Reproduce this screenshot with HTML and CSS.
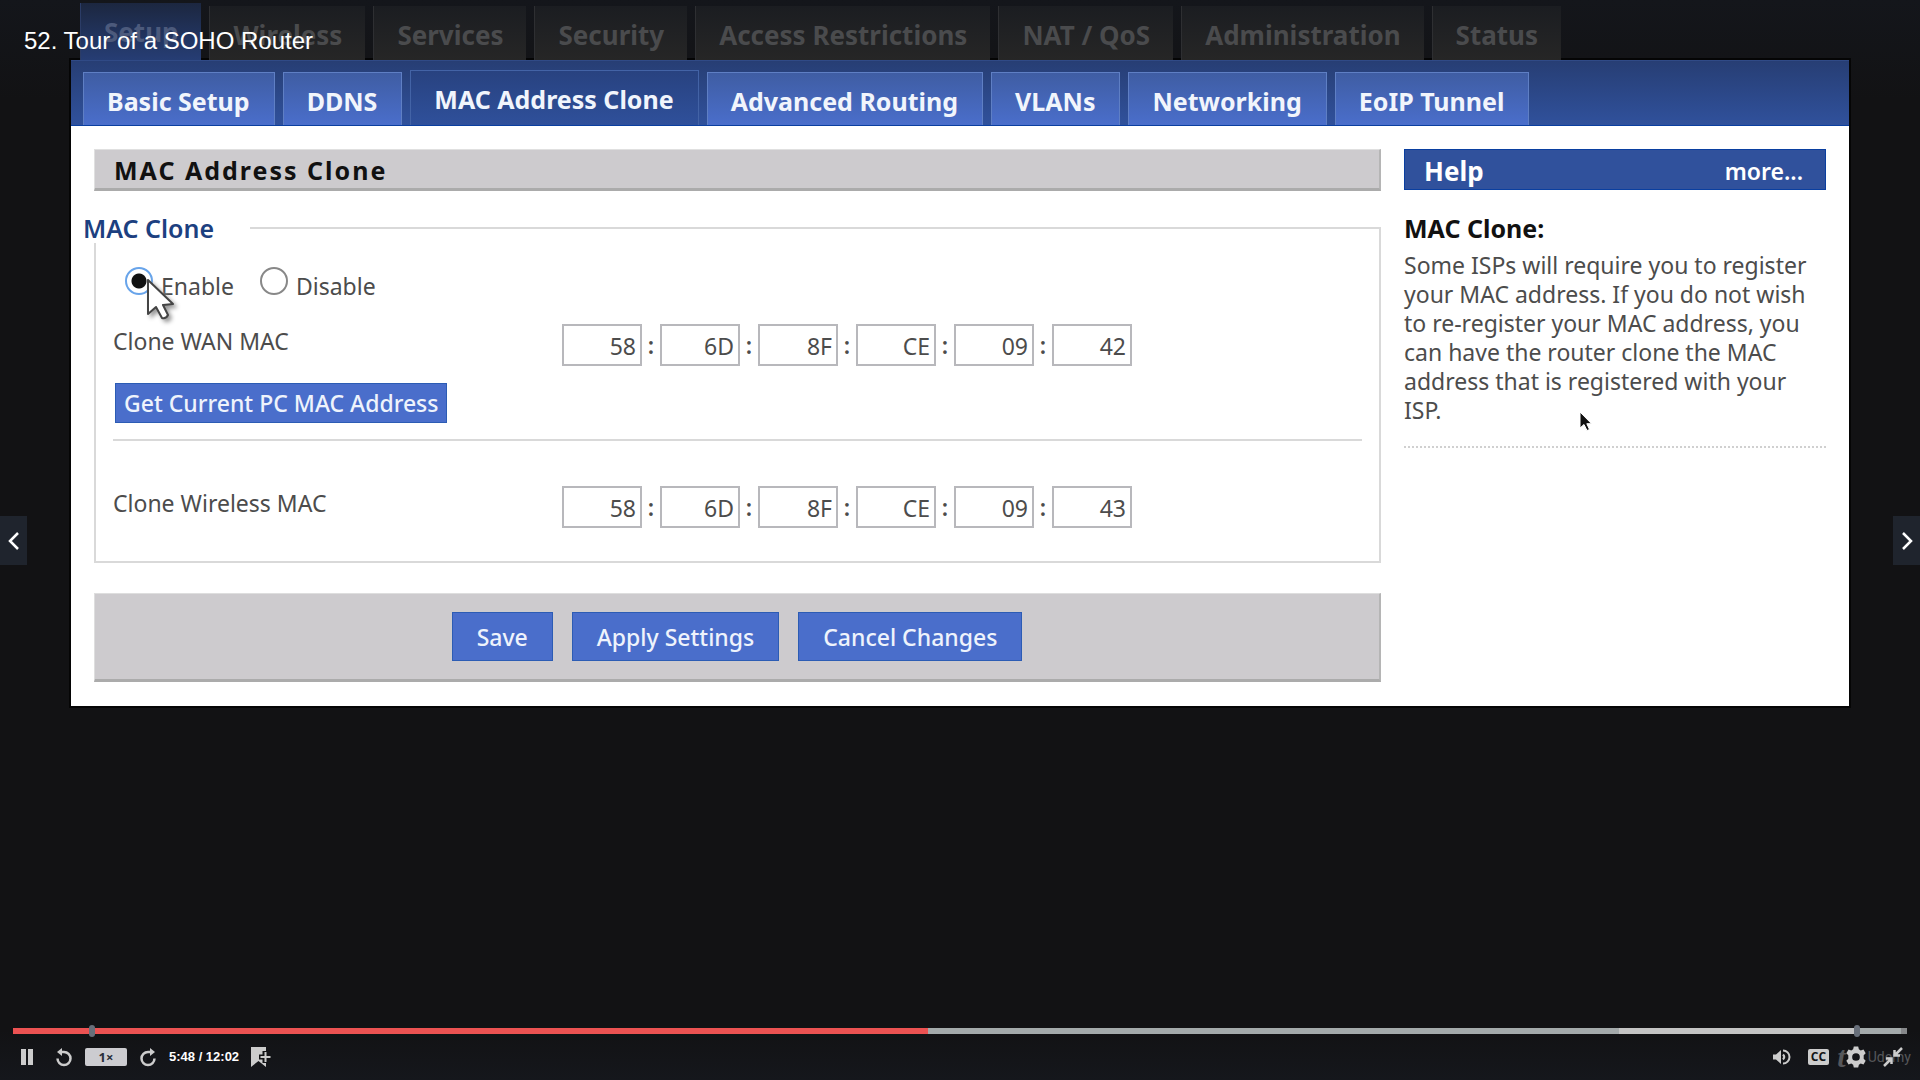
FILE: index.html
```html
<!DOCTYPE html>
<html lang="en">
<head>
<meta charset="utf-8">
<title>52. Tour of a SOHO Router</title>
<link rel="stylesheet" href="styles.css">
</head>
<body>
<div class="player">
  <h1 class="lecture-title">52. Tour of a SOHO Router</h1>

  <main class="video">
    <nav class="main-tabs" aria-label="Router sections">
      <a class="main-tab main-tab-active" href="#">Setup</a>
      <a class="main-tab" href="#">Wireless</a>
      <a class="main-tab" href="#">Services</a>
      <a class="main-tab" href="#">Security</a>
      <a class="main-tab" href="#">Access Restrictions</a>
      <a class="main-tab" href="#">NAT / QoS</a>
      <a class="main-tab" href="#">Administration</a>
      <a class="main-tab" href="#">Status</a>
    </nav>
    <div class="router">
      <nav class="sub-tabs" aria-label="Setup pages">
        <a class="sub-tab" href="#">Basic Setup</a>
        <a class="sub-tab" href="#">DDNS</a>
        <a class="sub-tab sub-tab-active" href="#">MAC Address Clone</a>
        <a class="sub-tab" href="#">Advanced Routing</a>
        <a class="sub-tab" href="#">VLANs</a>
        <a class="sub-tab" href="#">Networking</a>
        <a class="sub-tab" href="#">EoIP Tunnel</a>
      </nav>
      <div class="router-body">
        <form class="settings">
          <h2 class="settings-title">MAC Address Clone</h2>
          <fieldset class="group">
            <legend class="group-title">MAC Clone</legend>
            <div class="radios">
              <label class="choice"><input class="radio" type="radio" name="clone" checked>Enable</label>
              <label class="choice"><input class="radio" type="radio" name="clone">Disable</label>
            </div>
            <div class="mac-row">
              <span class="mac-label" id="wan">Clone WAN MAC</span>
              <div class="mac" role="group" aria-labelledby="wan">
                <input class="octet" aria-label="WAN octet 1" value="58"><span class="colon">:</span>
                <input class="octet" aria-label="WAN octet 2" value="6D"><span class="colon">:</span>
                <input class="octet" aria-label="WAN octet 3" value="8F"><span class="colon">:</span>
                <input class="octet" aria-label="WAN octet 4" value="CE"><span class="colon">:</span>
                <input class="octet" aria-label="WAN octet 5" value="09"><span class="colon">:</span>
                <input class="octet" aria-label="WAN octet 6" value="42">
              </div>
            </div>
            <button class="button button-inline" type="button">Get Current PC MAC Address</button>
            <hr class="rule">
            <div class="mac-row">
              <span class="mac-label" id="wireless">Clone Wireless MAC</span>
              <div class="mac" role="group" aria-labelledby="wireless">
                <input class="octet" aria-label="Wireless octet 1" value="58"><span class="colon">:</span>
                <input class="octet" aria-label="Wireless octet 2" value="6D"><span class="colon">:</span>
                <input class="octet" aria-label="Wireless octet 3" value="8F"><span class="colon">:</span>
                <input class="octet" aria-label="Wireless octet 4" value="CE"><span class="colon">:</span>
                <input class="octet" aria-label="Wireless octet 5" value="09"><span class="colon">:</span>
                <input class="octet" aria-label="Wireless octet 6" value="43">
              </div>
            </div>
          </fieldset>
          <div class="actions">
            <button class="button" type="button">Save</button>
            <button class="button" type="button">Apply Settings</button>
            <button class="button" type="button">Cancel Changes</button>
          </div>
        </form>
        <aside class="help">
          <div class="help-head"><h2 class="help-title">Help</h2><a class="help-more" href="#">more...</a></div>
          <h3 class="help-topic">MAC Clone:</h3>
          <p class="help-text">Some ISPs will require you to register your MAC address. If you do not wish to re-register your MAC address, you can have the router clone the MAC address that is registered with your ISP.</p>
        </aside>
      </div>
    </div>
  </main>

  <svg class="cursor cursor-video" width="36" height="46" viewBox="0 0 36 46" aria-hidden="true"><path d="M1 1V35L9 28L15 39Q19 40 21 36L16 26L26 25Z" fill="#fff" stroke="#444" stroke-width="2" stroke-linejoin="round"/></svg>
  <svg class="cursor cursor-live" width="14" height="22" viewBox="0 0 14 22" aria-hidden="true"><path d="M1 1V17L5 13.500L8 19.500L10.500 18.500L7.800 12.700H12.500Z" fill="#111" stroke="#fff" stroke-width="1"/></svg>

  <button class="side side-prev" type="button" aria-label="Previous"><svg width="12" height="18" viewBox="0 0 12 18"><path d="M10 1L2 9L10 17" fill="none" stroke="#fff" stroke-width="2.500"/></svg></button>
  <button class="side side-next" type="button" aria-label="Next"><svg width="12" height="18" viewBox="0 0 12 18"><path d="M2 1L10 9L2 17" fill="none" stroke="#fff" stroke-width="2.500"/></svg></button>

  <footer class="controls">
    <div class="progress">
      <div class="seg seg-played" style="width:48.3%"></div>
      <div class="seg seg-buffered" style="width:36.5%"></div>
      <div class="seg seg-ahead" style="width:12.4%"></div>
      <div class="seg seg-buffered" style="width:2.5%"></div>
      <div class="seg seg-rest"></div>
      <span class="pin" style="left:4.2%"></span>
      <span class="pin" style="left:97.4%"></span>
    </div>
    <div class="bar">
      <div class="bar-side bar-left">
        <button class="icon" type="button" aria-label="Pause"><svg width="26" height="20" viewBox="0 0 26 20"><path d="M4 2h5v16H4zM11 2h5v16h-5z"/></svg></button>
        <button class="icon" type="button" aria-label="Rewind"><svg width="20" height="20" viewBox="0 0 20 20"><path d="M3.500 11.500A6.500 6.500 0 1 0 10 5H6" fill="none" stroke="#ccc" stroke-width="2.500"/><path d="M8 1V9L3 5Z"/></svg></button>
        <button class="speed" type="button">1×</button>
        <button class="icon" type="button" aria-label="Forward"><svg width="20" height="20" viewBox="0 0 20 20"><path d="M16.500 11.500A6.500 6.500 0 1 1 10 5H14" fill="none" stroke="#ccc" stroke-width="2.500"/><path d="M12 1V9L17 5Z"/></svg></button>
        <span class="time">5:48 / 12:02</span>
        <button class="icon" type="button" aria-label="Add bookmark"><svg width="22" height="22" viewBox="0 0 22 22"><path d="M1 1H16V21L8.500 15L1 21Z"/><path d="M15 5V17M9 11H21" stroke="#131416" stroke-width="5"/><path d="M15.500 6V16M10.500 11H20.500" stroke="#ccc" stroke-width="2"/></svg></button>
      </div>
      <div class="bar-side bar-right">
        <button class="icon" type="button" aria-label="Volume"><svg width="20" height="20" viewBox="0 0 20 20"><path d="M1 7.500H4L9 3V17L4 12.500H1Z"/><path d="M11 7.500Q13.500 10 11 12.500M11 3.500A6.500 6.500 0 0 1 11 16.500" fill="none" stroke="#ccc" stroke-width="2"/></svg></button>
        <button class="cc" type="button" aria-label="Captions">CC</button>
        <span class="brand" aria-hidden="true"><i class="brand-mark">t</i><span>Udemy</span></span>
        <button class="icon" type="button" aria-label="Settings"><svg width="22" height="22" viewBox="0 0 20 20"><path fill-rule="evenodd" d="M8 0.500H12L12.600 3L14.300 4L16.800 3.200L18.800 6.700L17 8.500V11.500L18.800 13.300L16.800 16.800L14.300 16L12.600 17L12 19.500H8L7.400 17L5.700 16L3.200 16.800L1.200 13.300L3 11.500V8.500L1.200 6.700L3.200 3.200L5.700 4L7.400 3ZM10 6.500A3.500 3.500 0 1 0 10 13.500A3.500 3.500 0 1 0 10 6.500Z"/></svg></button>
        <button class="icon" type="button" aria-label="Exit fullscreen"><svg width="20" height="20" viewBox="0 0 20 20"><path d="M19 1L12 8M11.500 3V8.500H17M1 19L8 12M3 11.500H8.500V17" fill="none" stroke="#ccc" stroke-width="2.500"/></svg></button>
      </div>
    </div>
  </footer>
</div>
</body>
</html>
```
FILE: styles.css
```css
* { box-sizing: border-box; }
body { margin: 0; background: #121214; }
a { color: inherit; text-decoration: none; }
h1, h2, h3, p { margin: 0; }
button { font: inherit; border: 0; padding: 0; cursor: pointer; }

.player {
  position: relative;
  display: flex;
  flex-direction: column;
  min-height: 100vh;
  background: linear-gradient(#14161b, #121214 100px, #121214 calc(100% - 50px), #15171c);
  font-family: "Noto Sans", "Open Sans", sans-serif;
  font-size: 23px;
}
.lecture-title {
  position: absolute;
  top: 26px;
  left: 24px;
  z-index: 2;
  color: #fff;
  font: 24px/30px "Liberation Sans", Arial, sans-serif;
}

/* Router page */
.video { flex: 1; padding: 0 71px; }
.main-tabs { display: flex; align-items: flex-end; gap: 8px; height: 60px; padding-left: 9px; }
.main-tab {
  height: 54px;
  padding: 0 23px;
  background: linear-gradient(#1b1d21, #262626);
  border-left: 1px solid #2e2f32;
  color: #4a4b4d;
  font-size: 26px;
  font-weight: 700;
  line-height: 58px;
  white-space: nowrap;
}
.main-tab-active { height: 57px; background: linear-gradient(#1c2740, #263d74); border-color: #2b3c66; color: #4c5a7c; }
.router { background: #fff; box-shadow: 0 0 0 2px #050505; }
.sub-tabs {
  display: flex;
  align-items: flex-end;
  gap: 8px;
  height: 66px;
  padding-left: 12px;
  background: linear-gradient(#273e74, #30519c);
  border-top: 1px solid #304a86;
  border-bottom: 1px solid #0a3fa0;
}
.sub-tab {
  height: 53px;
  padding: 0 24px 0 23px;
  background: linear-gradient(#3f5da3, #4a6ecb);
  border: 1px solid #5f7fc4;
  border-bottom: 0;
  color: #f1f5fc;
  font-size: 25px;
  font-weight: 700;
  line-height: 56px;
  white-space: nowrap;
}
.sub-tab-active { height: 55px; background: linear-gradient(#284280, #2f509b); border-color: #4363a6; }

.router-body { display: flex; gap: 23px; padding: 23px 23px 24px; }
.settings { flex: 1; }
.settings-title {
  height: 42px;
  padding-left: 19px;
  background: #cdcbce;
  border: solid #e0e0e0;
  border-width: 1px 2px 3px 1px;
  border-right-color: #b5b5b5;
  border-bottom-color: #ababab;
  color: #111;
  font-size: 25px;
  font-weight: 700;
  letter-spacing: 2px;
  line-height: 40px;
}
.group { margin: 22px 0 0; padding: 0 17px 33px; border: 2px solid #d9d9d9; color: #4c4c4c; }
.group-title { height: 30px; margin-left: -32px; padding-right: 36px; background: #fff; color: #1c4080; font-size: 25px; font-weight: 600; line-height: 30px; }
.radios { display: flex; gap: 26px; padding: 23px 0 0 12px; }
.choice { display: flex; align-items: flex-start; gap: 8px; height: 40px; line-height: 40px; }
.radio { appearance: none; width: 28px; height: 28px; margin: 1px 0 0; border: 2px solid #888; border-radius: 50%; background: #fff; }
.radio:checked { border-color: #68a4ea; background: radial-gradient(#111 7px, #fff 8px); }
.mac-row { display: flex; height: 42px; margin-top: 18px; }
.mac-label { width: 449px; line-height: 34px; }
.mac { display: flex; }
.octet {
  width: 80px;
  height: 42px;
  padding: 2px 4px 0;
  border: 2px solid #b8b8bc;
  background: #fff;
  color: #4c4c4c;
  font: 23px "Noto Sans", "Open Sans", sans-serif;
  text-align: right;
}
.colon { width: 18px; line-height: 42px; text-align: center; font-weight: 600; }
.button { height: 49px; padding: 0 24px; background: #4a6ecb; border: 1px solid #2c5cb4; color: #eef3fc; font-weight: 500; white-space: nowrap; }
.button-inline { display: block; height: 40px; margin: 17px 0 0 2px; padding: 0 8px; }
.rule { height: 2px; margin: 16px 0 45px; border: 0; background: #d9d9d9; }
.actions {
  display: flex;
  justify-content: center;
  gap: 19px;
  margin-top: 30px;
  padding: 18px 0;
  background: #cdcbce;
  border: solid #dedede;
  border-width: 1px 2px 3px 1px;
  border-right-color: #b5b5b5;
  border-bottom-color: #ababab;
}

.help { width: 422px; color: #4c4c4c; }
.help-head { display: flex; justify-content: space-between; height: 41px; padding: 0 22px 0 19px; background: #30519c; border: 1px solid #0a3fa0; color: #fff; line-height: 42px; }
.help-title { font-size: 26px; font-weight: 700; }
.help-more { font-weight: 600; }
.help-topic { margin-top: 23px; color: #111; font-size: 25px; font-weight: 700; line-height: 30px; }
.help-text { margin-top: 8px; padding-bottom: 21px; border-bottom: 2px dotted #d0d0d0; line-height: 29px; }

/* Pointers */
.cursor { position: absolute; z-index: 2; }
.cursor-video { top: 279px; left: 147px; filter: drop-shadow(3px 3px 2px #999); }
.cursor-live { top: 411px; left: 1579px; }

/* Player chrome */
.side { position: absolute; top: calc(50% - 24px); display: flex; align-items: center; justify-content: center; width: 27px; height: 49px; background: #1f242d; }
.side-prev { left: 0; }
.side-next { right: 0; }
.controls { padding: 0 13px 10px; color: #ccc; }
.progress { position: relative; display: flex; height: 6px; }
.seg-played { background: #ec5252; }
.seg-buffered { background: #a4aaab; }
.seg-ahead { background: #c4c4c4; }
.seg-rest { flex: 1; background: #86888a; }
.pin { position: absolute; top: -3px; width: 6px; height: 12px; margin-left: -4px; border-radius: 3px; background: #686f7a; }
.bar { display: flex; justify-content: space-between; height: 26px; margin-top: 10px; }
.bar-side { position: relative; display: flex; align-items: center; }
.bar-left { gap: 11px; padding-left: 4px; }
.bar-right { gap: 16px; padding-right: 4px; }
.icon { display: flex; background: none; fill: #ccc; z-index: 1; }
.speed { width: 42px; height: 18px; border-radius: 2px; background: #ccccd0; color: #29303b; font: 700 13px/18px "Open Sans", sans-serif; }
.time { color: #fff; font: 700 13px/18px "Liberation Sans", Arial, sans-serif; }
.cc { width: 21px; height: 16px; border-radius: 2px; background: #ccc; color: #131416; font: 700 12px/16px "Open Sans", sans-serif; }
.brand { position: absolute; right: -4px; display: flex; gap: 22px; align-items: center; color: #56575a; font: 14px/20px Roboto, sans-serif; }
.brand-mark { font: italic 700 30px/20px "Liberation Serif", serif; }
```
